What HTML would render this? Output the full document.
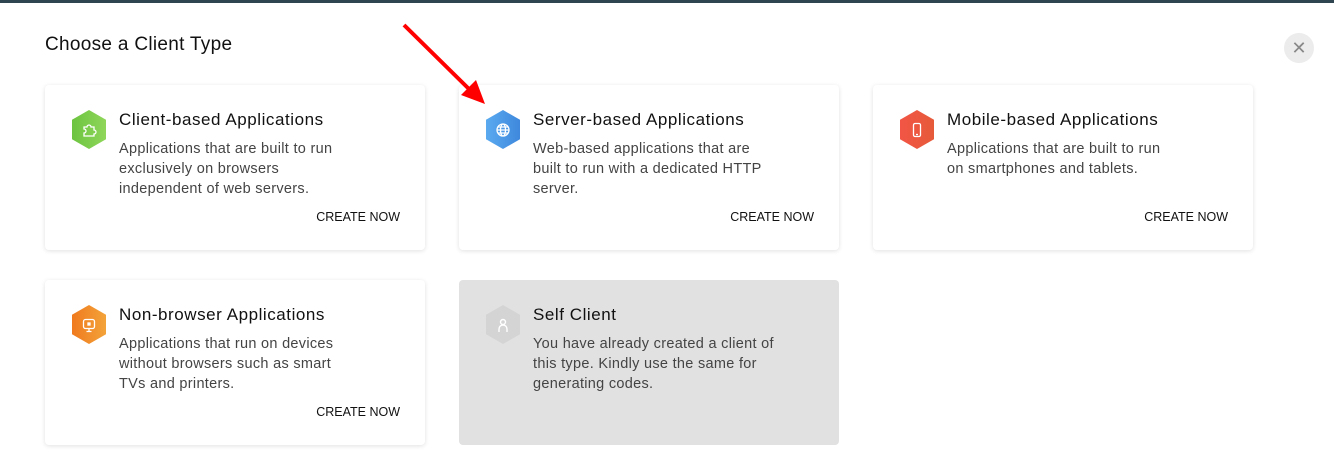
<!DOCTYPE html>
<html><head><style>
body{margin:0;width:1334px;height:464px;background:#fff;font-family:"Liberation Sans",sans-serif;position:relative;overflow:hidden;color:#222}
.top{position:absolute;left:0;top:0;width:1334px;height:3px;background:#2f4550}
h1{position:absolute;left:45px;top:34px;margin:0;font-size:19px;letter-spacing:.3px;font-weight:normal;color:#111}
.close{position:absolute;left:1284px;top:33px;width:30px;height:30px;border-radius:50%;background:#ececec;color:#888;font-size:18px;text-align:center;line-height:30px}
.card{position:absolute;width:380px;height:165px;background:#fff;border-radius:4px;box-shadow:0 1px 5px rgba(0,0,0,.12)}
.card.dis{background:#e1e1e1;box-shadow:none}
.hex{position:absolute;left:27px;top:25px;width:34px;height:39px;clip-path:polygon(50% 0,100% 25%,100% 75%,50% 100%,0 75%,0 25%)}
.hex svg{position:absolute;left:9px;top:12px}
.t{position:absolute;left:74px;top:25px;font-size:17px;letter-spacing:.55px;color:#111;white-space:nowrap}
.d{position:absolute;left:74px;top:54px;font-size:14.5px;letter-spacing:.3px;line-height:20px;color:#444;white-space:nowrap}
.c{position:absolute;right:25px;top:125px;font-size:12.5px;color:#111}
</style></head><body>
<div class="top"></div>
<h1>Choose a Client Type</h1>
<div class="close">✕</div>

<div class="card" style="left:45px;top:85px">
<div class="hex" style="background:linear-gradient(90deg,#6cc440,#8fd65a)"><svg width="16" height="16" viewBox="0 0 16 16" fill="none" stroke="#fff" stroke-width="1.3"><path d="M3 5h3a2 2 0 1 1 4 0h3v3a2 2 0 1 1 0 4v2H3v-3a2 2 0 1 0 0-4z"/></svg></div>
<div class="t">Client-based Applications</div>
<div class="d">Applications that are built to run<br>exclusively on browsers<br>independent of web servers.</div>
<div class="c">CREATE NOW</div></div>

<div class="card" style="left:459px;top:85px">
<div class="hex" style="background:linear-gradient(90deg,#5aaaf0,#3f88dd)"><svg width="16" height="16" viewBox="0 0 16 16" fill="none" stroke="#fff" stroke-width="1.3"><circle cx="8" cy="8" r="6"/><ellipse cx="8" cy="8" rx="2.5" ry="6"/><path d="M2 8h12M3 5h10M3 11h10"/></svg></div>
<div class="t">Server-based Applications</div>
<div class="d">Web-based applications that are<br>built to run with a dedicated HTTP<br>server.</div>
<div class="c">CREATE NOW</div></div>

<div class="card" style="left:873px;top:85px">
<div class="hex" style="background:linear-gradient(90deg,#f25545,#e65a3a)"><svg width="16" height="16" viewBox="0 0 16 16" fill="none" stroke="#fff" stroke-width="1.3"><rect x="4.5" y="1.5" width="7" height="13" rx="1.5"/><path d="M7 12.5h2"/></svg></div>
<div class="t">Mobile-based Applications</div>
<div class="d">Applications that are built to run<br>on smartphones and tablets.</div>
<div class="c">CREATE NOW</div></div>

<div class="card" style="left:45px;top:280px">
<div class="hex" style="background:linear-gradient(90deg,#f07a1e,#f3a33a)"><svg width="16" height="16" viewBox="0 0 16 16" fill="none" stroke="#fff" stroke-width="1.3"><rect x="2.5" y="2.5" width="11" height="9" rx="2"/><path d="M8 11.5v3M5.5 14.5h5"/><rect x="7" y="6" width="2" height="2" fill="#fff"/></svg></div>
<div class="t">Non-browser Applications</div>
<div class="d">Applications that run on devices<br>without browsers such as smart<br>TVs and printers.</div>
<div class="c">CREATE NOW</div></div>

<div class="card dis" style="left:459px;top:280px">
<div class="hex" style="background:#d4d4d4"><svg width="16" height="16" viewBox="0 0 16 16" fill="none" stroke="#fff" stroke-width="1.4"><circle cx="8" cy="5" r="2.5"/><path d="M4 15v-3a4 4 0 0 1 8 0v3"/></svg></div>
<div class="t">Self Client</div>
<div class="d">You have already created a client of<br>this type. Kindly use the same for<br>generating codes.</div>
</div>
<svg style="position:absolute;left:0;top:0" width="1334" height="464"><line x1="404" y1="25" x2="470" y2="90" stroke="#f00" stroke-width="4"/><polygon points="485,104 461,95 476,80" fill="#f00"/></svg>
</body></html>
